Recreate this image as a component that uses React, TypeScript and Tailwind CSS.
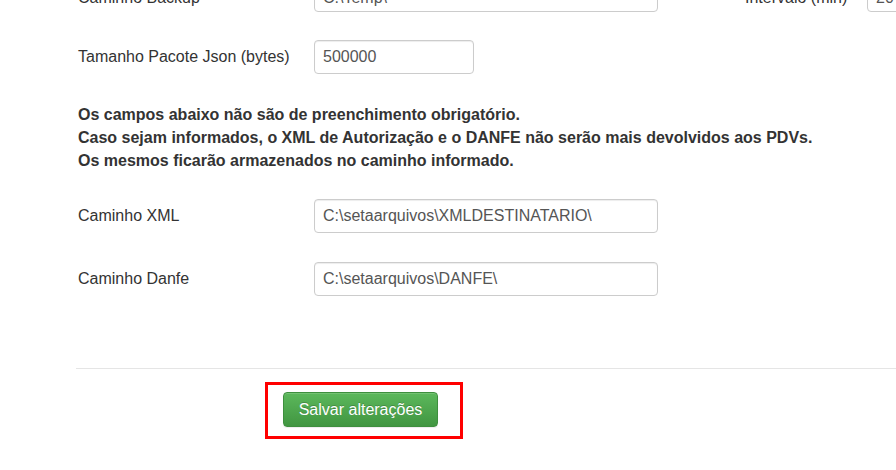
import React from "react";

function Field({ value, width, extra = "" }: { value: string; width: string; extra?: string }) {
  return (
    <div className={`${width} h-[34px] shrink-0 border border-[#ccc] rounded-[4px] bg-white px-[8px] flex items-center text-[#555] whitespace-nowrap overflow-hidden shadow-[inset_0_1px_1px_rgba(0,0,0,0.075)] ${extra}`}>
      {value}
    </div>
  );
}

function Row({ label, children, className, labelExtra = "" }: { label: string; children: React.ReactNode; className: string; labelExtra?: string }) {
  return (
    <div className={`flex items-center h-[34px] ${className}`}>
      <div className={`w-[238px] shrink-0 pl-[2px] whitespace-nowrap ${labelExtra}`}>{label}</div>
      {children}
    </div>
  );
}

export default function App() {
  return (
    <div className="h-[470px] overflow-hidden bg-white text-[16px] text-[#333] font-['Liberation_Sans',Arial,sans-serif]">
      <div className="pl-[76px]">
        <Row label="Caminho Backup" className="-mt-[22px]" labelExtra="pt-[6px]">
          <Field value="C:\Temp\" width="w-[344px]" extra="pt-[5px]" />
          <div className="ml-[87px] w-[122px] shrink-0 whitespace-nowrap pt-[6px]">Intervalo (min)</div>
          <Field value="20" width="w-[60px]" extra="pt-[5px]" />
        </Row>
        <Row label="Tamanho Pacote Json (bytes)" className="mt-[28px]">
          <Field value="500000" width="w-[160px]" />
        </Row>
        <div className="mt-[29px] pl-[2px] font-bold leading-[23px]">
          <div>Os campos abaixo não são de preenchimento obrigatório.</div>
          <div>Caso sejam informados, o XML de Autorização e o DANFE não serão mais devolvidos aos PDVs.</div>
          <div>Os mesmos ficarão armazenados no caminho informado.</div>
        </div>
        <Row label="Caminho XML" className="mt-[27px]">
          <Field value="C:\setaarquivos\XMLDESTINATARIO\" width="w-[344px]" />
        </Row>
        <Row label="Caminho Danfe" className="mt-[29px]">
          <Field value="C:\setaarquivos\DANFE\" width="w-[344px]" />
        </Row>
        <div className="mt-[72px] border-t border-[#e5e5e5]" />
        <div className="mt-[13px] ml-[189px] inline-block border-[3px] border-[#ff0000] pl-[15px] pr-[22px] pt-[7px] pb-[9px]">
          <button className="h-[35px] w-[155px] rounded-[4px] border border-[#3e8f3e] bg-linear-to-b from-[#5cb85c] to-[#419641] text-white text-[16px] [text-shadow:0_-1px_0_rgba(0,0,0,0.2)] shadow-[inset_0_1px_0_rgba(255,255,255,0.15),0_1px_1px_rgba(0,0,0,0.075)]">
            Salvar alterações
          </button>
        </div>
      </div>
    </div>
  );
}
